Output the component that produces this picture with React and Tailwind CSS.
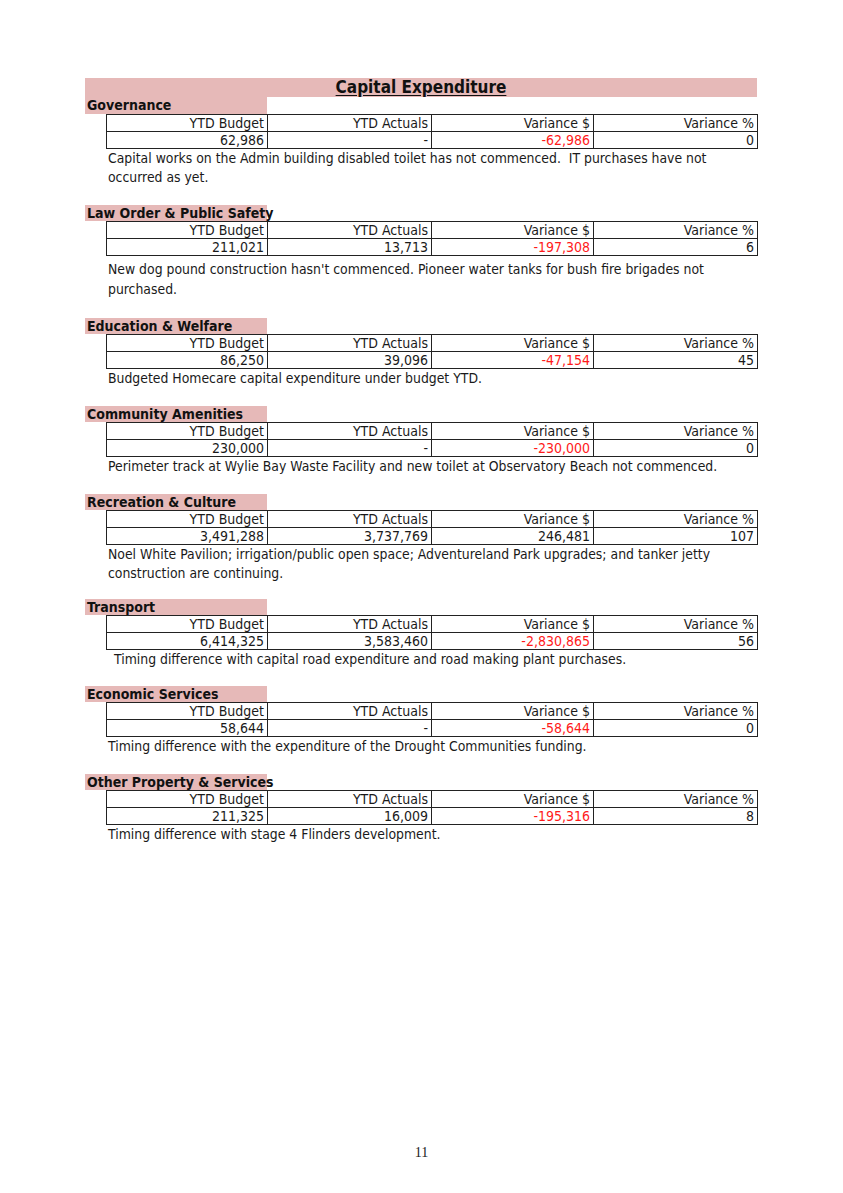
import React from 'react';

const sections = [
  {
    name: 'Governance',
    budget: '62,986',
    actuals: '-',
    variance: '-62,986',
    red: true,
    pct: '0',
    lines: [
      'Capital works on the Admin building disabled toilet has not commenced.\u00a0 IT purchases have not',
      'occurred as yet.',
    ],
    gap: 'mb-[18px]',
  },
  {
    name: 'Law Order & Public Safety',
    budget: '211,021',
    actuals: '13,713',
    variance: '-197,308',
    red: true,
    pct: '6',
    lines: [
      "New dog pound construction hasn't commenced. Pioneer water tanks for bush fire brigades not",
      'purchased.',
    ],
    textClass: 'mt-[3px] leading-[20px]',
    gap: 'mb-[19px]',
  },
  {
    name: 'Education & Welfare',
    budget: '86,250',
    actuals: '39,096',
    variance: '-47,154',
    red: true,
    pct: '45',
    lines: ['Budgeted Homecare capital expenditure under budget YTD.'],
  },
  {
    name: 'Community Amenities',
    budget: '230,000',
    actuals: '-',
    variance: '-230,000',
    red: true,
    pct: '0',
    lines: ['Perimeter track at Wylie Bay Waste Facility and new toilet at Observatory Beach not commenced.'],
  },
  {
    name: 'Recreation & Culture',
    budget: '3,491,288',
    actuals: '3,737,769',
    variance: '246,481',
    red: false,
    pct: '107',
    lines: [
      'Noel White Pavilion; irrigation/public open space; Adventureland Park upgrades; and tanker jetty',
      'construction are continuing.',
    ],
    gap: 'mb-[16px]',
  },
  {
    name: 'Transport',
    budget: '6,414,325',
    actuals: '3,583,460',
    variance: '-2,830,865',
    red: true,
    pct: '56',
    lines: ['Timing difference with capital road expenditure and road making plant purchases.'],
    textClass: 'pl-[6px]',
    gap: 'mb-[17px]',
  },
  {
    name: 'Economic Services',
    budget: '58,644',
    actuals: '-',
    variance: '-58,644',
    red: true,
    pct: '0',
    lines: ['Timing difference with the expenditure of the Drought Communities funding.'],
  },
  {
    name: 'Other Property & Services',
    budget: '211,325',
    actuals: '16,009',
    variance: '-195,316',
    red: true,
    pct: '8',
    lines: ['Timing difference with stage 4 Flinders development.'],
  },
];

// one cell of the small 4 column grid
const Cell = ({ children, last, red }) => (
  <div
    className={
      'h-[16px] leading-[16px] pr-[3px] whitespace-nowrap text-right ' +
      (last ? '' : 'border-r border-[#222] ') +
      (red ? 'text-[#ff1a1a]' : 'text-[#1a1a1a]')
    }
  >
    {children}
  </div>
);

const Section = ({ s, first }) => (
  <div className={s.gap || 'mb-[18px]'}>
    <div className={'w-[182px] bg-[#e6b9b8] font-bold text-[14px] pl-[2px] whitespace-nowrap text-[#111] ' + (first ? 'h-[17px] leading-[17px]' : 'h-[16px] leading-[16px]')}>
      {s.name}
    </div>
    <div className="ml-[21px] w-[652px] border border-[#222] text-[14px]">
      <div className="grid grid-cols-[161px_164px_162px_1fr] border-b border-[#222]">
        <Cell>YTD Budget</Cell>
        <Cell>YTD Actuals</Cell>
        <Cell>Variance $</Cell>
        <Cell last>Variance %</Cell>
      </div>
      <div className="grid grid-cols-[161px_164px_162px_1fr]">
        <Cell>{s.budget}</Cell>
        <Cell>{s.actuals}</Cell>
        <Cell red={s.red}>{s.variance}</Cell>
        <Cell last>{s.pct}</Cell>
      </div>
    </div>
    <div className={'ml-[23px] text-[13.85px] text-[#1a1a1a] leading-[19px] ' + (s.textClass || '')}>
      {s.lines.map((l, i) => (
        <div key={i} className="whitespace-nowrap">{l}</div>
      ))}
    </div>
  </div>
);

export default function App() {
  return (
    <div
      className="relative w-[843px] h-[1193px] bg-white pt-[78px] pl-[85px]"
      style={{ fontFamily: '"DejaVu Sans Condensed", "DejaVu Sans", Tahoma, sans-serif' }}
    >
      <div className="w-[672px]">
        <div className="h-[19px] bg-[#e6b9b8] text-center font-bold text-[17px] leading-[19px] text-[#111]">
          <span className="underline underline-offset-2">Capital Expenditure</span>
        </div>
        {sections.map((s, i) => (
          <Section key={s.name} s={s} first={i === 0} />
        ))}
      </div>
      <div
        className="absolute left-0 right-0 top-[1142px] text-center text-[14px] text-[#222]"
        style={{ fontFamily: '"Liberation Serif", "Times New Roman", serif' }}
      >
        11
      </div>
    </div>
  );
}
